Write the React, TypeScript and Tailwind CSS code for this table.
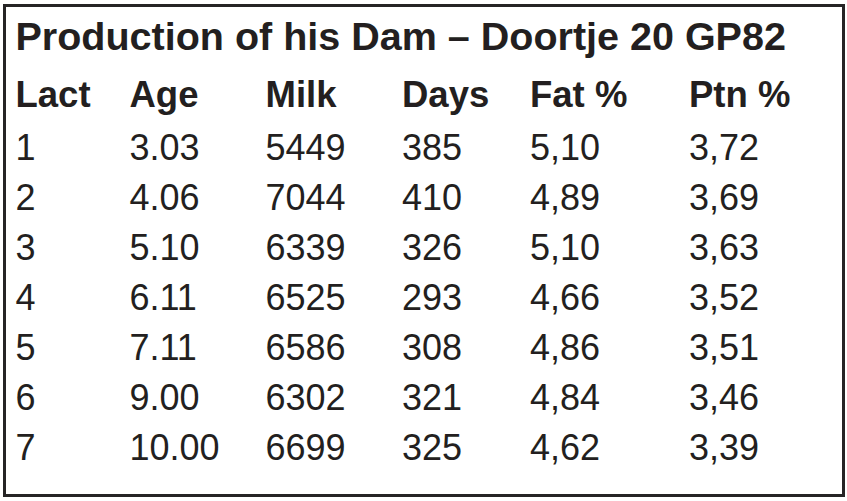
import React from "react";

const rows = [
  ["1", "3.03", "5449", "385", "5,10", "3,72"],
  ["2", "4.06", "7044", "410", "4,89", "3,69"],
  ["3", "5.10", "6339", "326", "5,10", "3,63"],
  ["4", "6.11", "6525", "293", "4,66", "3,52"],
  ["5", "7.11", "6586", "308", "4,86", "3,51"],
  ["6", "9.00", "6302", "321", "4,84", "3,46"],
  ["7", "10.00", "6699", "325", "4,62", "3,39"],
];

const headers = ["Lact", "Age", "Milk", "Days", "Fat %", "Ptn %"];

function Row({ cells, className }: { cells: string[]; className: string }) {
  return (
    <div className={`flex whitespace-nowrap ${className}`}>
      <div className="w-[114px] shrink-0">{cells[0]}</div>
      <div className="w-[136px] shrink-0">{cells[1]}</div>
      <div className="w-[136.5px] shrink-0">{cells[2]}</div>
      <div className="w-[128px] shrink-0">{cells[3]}</div>
      <div className="w-[159px] shrink-0">{cells[4]}</div>
      <div className="shrink-0">{cells[5]}</div>
    </div>
  );
}

export default function App() {
  return (
    <div
      className="w-[847px] h-[501px] bg-white pt-[4px] pl-[3px] text-[#231f20]"
      style={{ fontFamily: '"Liberation Sans", Arial, sans-serif' }}
    >
      <div className="w-[842px] h-[493px] border-[3px] border-[#262425] pl-[9.5px] pt-[1px]">
        <div className="h-[56px] leading-[56px] text-[39.5px] font-bold whitespace-nowrap mb-[6px]">
          Production of his Dam – Doortje 20 GP82
        </div>
        <Row cells={headers} className="h-[50px] leading-[50px] text-[36.5px] font-bold mb-[3px]" />
        {rows.map((r) => (
          <Row key={r[0]} cells={r} className="h-[50px] leading-[50px] text-[36px]" />
        ))}
      </div>
    </div>
  );
}
